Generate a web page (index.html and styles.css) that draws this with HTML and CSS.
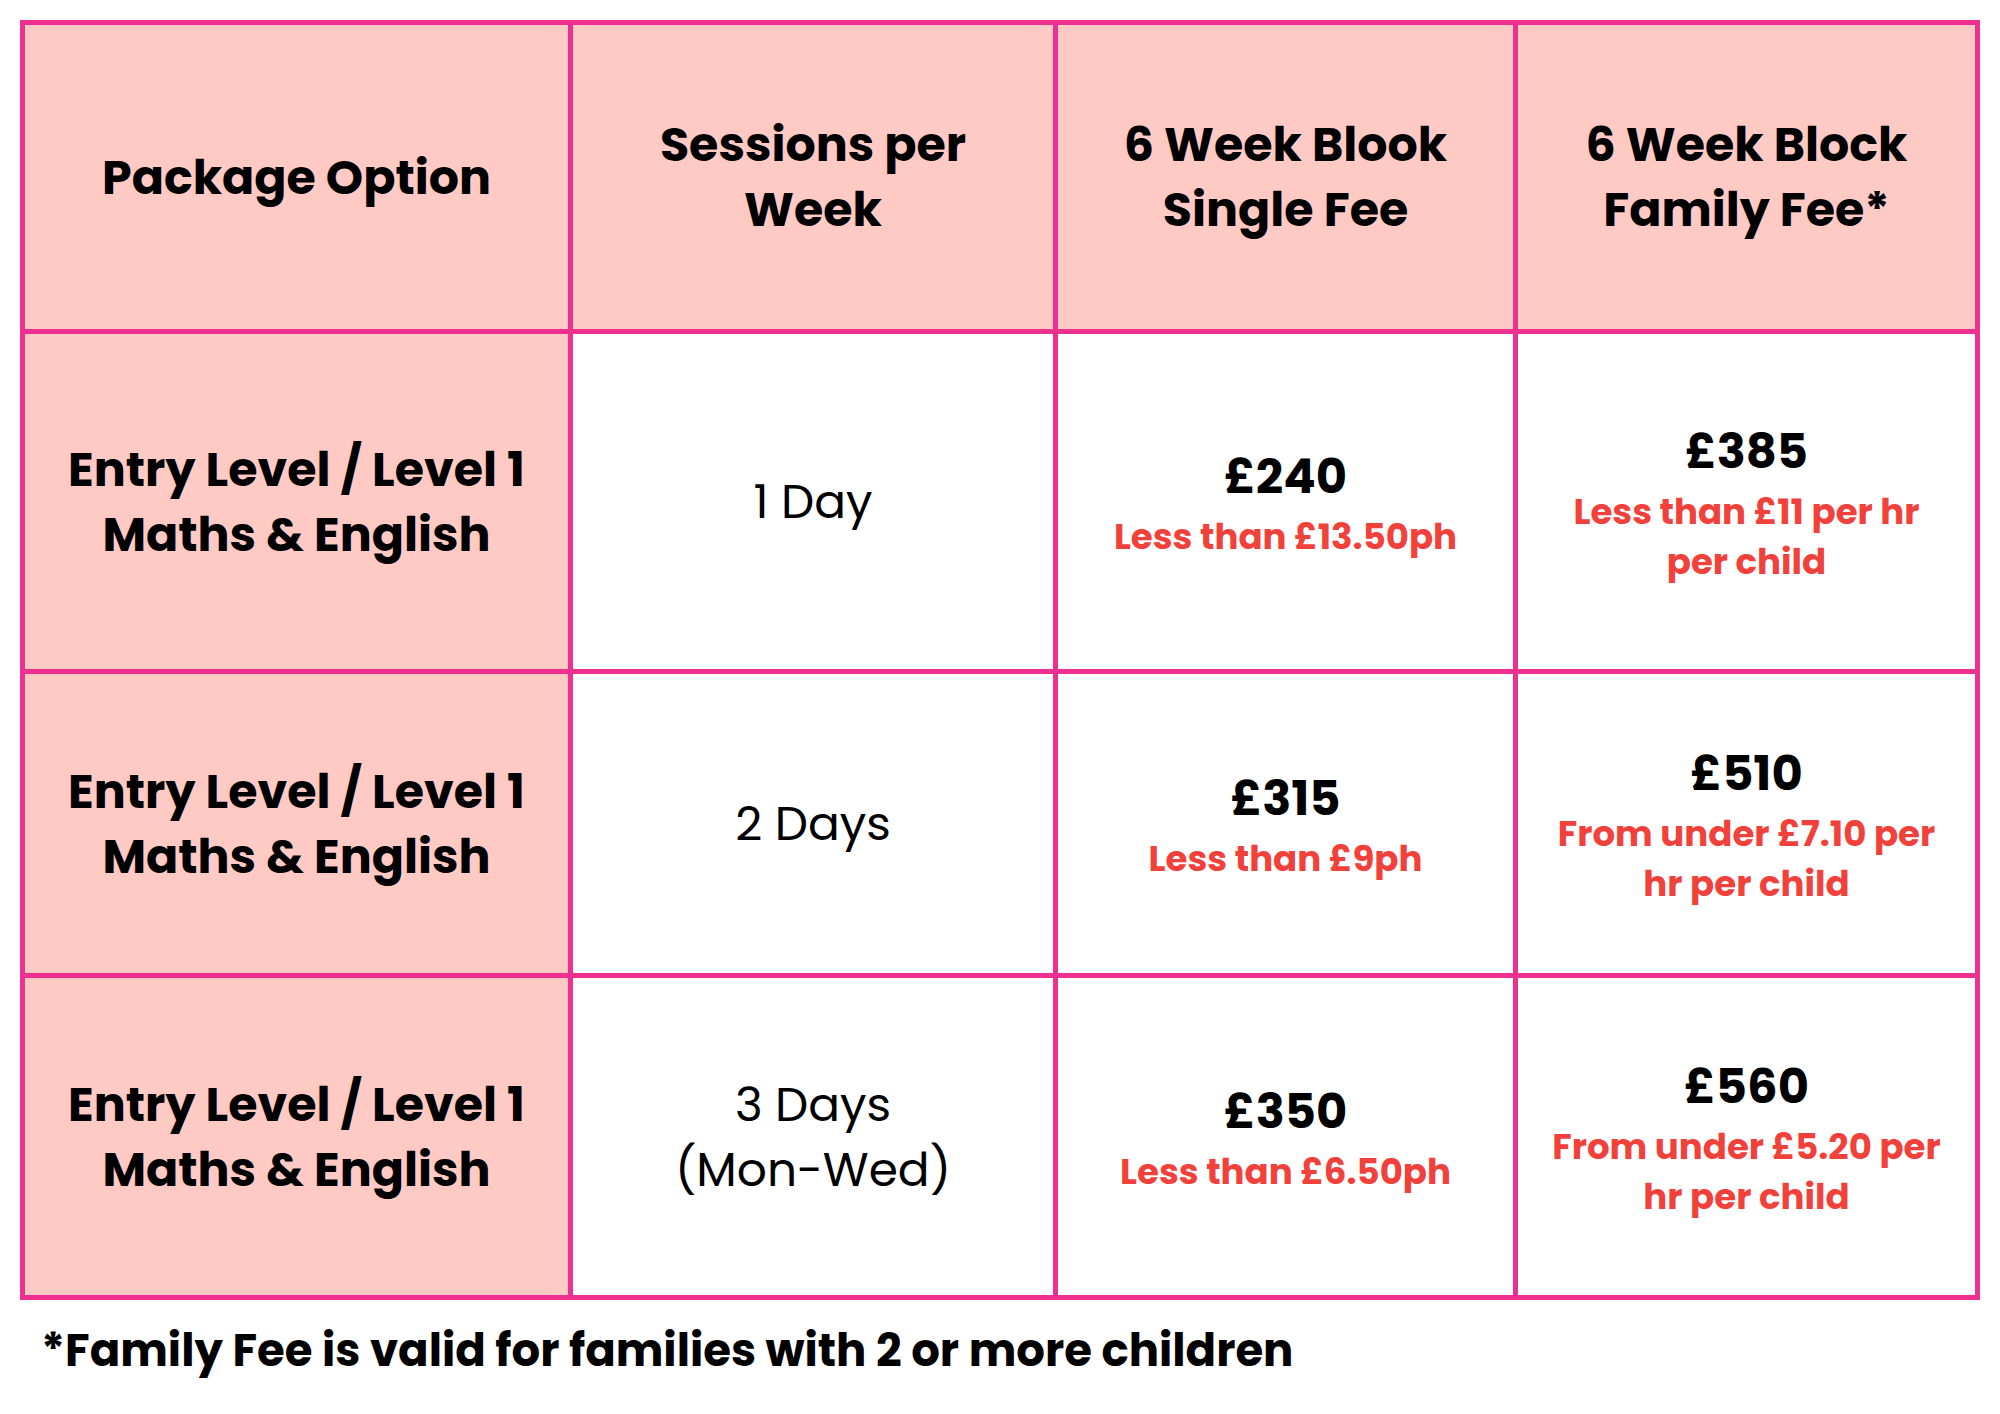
FILE: index.html
```html
<!DOCTYPE html>
<html lang="en">
<head>
<meta charset="utf-8">
<title>Package Options</title>
<link rel="stylesheet" href="styles.css">
</head>
<body>
<div class="page">
  <div class="table">
    <div class="cell head"><span class="h">Package Option</span></div>
    <div class="cell head"><span class="h">Sessions per<br>Week</span></div>
    <div class="cell head"><span class="h">6 Week Blook<br>Single Fee</span></div>
    <div class="cell head"><span class="h">6 Week Block<br>Family Fee*</span></div>

    <div class="cell label"><span class="h">Entry Level / Level 1<br>Maths &amp; English</span></div>
    <div class="cell"><span class="days">1 Day</span></div>
    <div class="cell"><span class="price">£240</span><span class="note">Less than £13.50ph</span></div>
    <div class="cell"><span class="price">£385</span><span class="note">Less than £11 per hr<br>per child</span></div>

    <div class="cell label"><span class="h">Entry Level / Level 1<br>Maths &amp; English</span></div>
    <div class="cell"><span class="days">2 Days</span></div>
    <div class="cell"><span class="price">£315</span><span class="note">Less than £9ph</span></div>
    <div class="cell"><span class="price">£510</span><span class="note">From under £7.10 per<br>hr per child</span></div>

    <div class="cell label"><span class="h">Entry Level / Level 1<br>Maths &amp; English</span></div>
    <div class="cell"><span class="days">3 Days<br>(Mon-Wed)</span></div>
    <div class="cell"><span class="price">£350</span><span class="note">Less than £6.50ph</span></div>
    <div class="cell"><span class="price">£560</span><span class="note">From under £5.20 per<br>hr per child</span></div>
  </div>
  <p class="footnote">*Family Fee is valid for families with 2 or more children</p>
</div>
</body>
</html>
```

FILE: styles.css
```css
html, body {
  margin: 0;
  padding: 0;
  background: #ffffff;
}

body {
  font-family: "Poppins", "Open Sans", "DejaVu Sans", sans-serif;
  color: #000000;
}

.page {
  padding: 20px 20px 0 20px;
}

.table {
  display: grid;
  grid-template-columns: 543px 480px 455px 457px;
  grid-template-rows: 304px 335px 299px 317px;
  gap: 5px;
  padding: 5px;
  background: #ee3191;
  width: 1950px;
}

.cell {
  background: #ffffff;
  display: flex;
  flex-direction: column;
  align-items: center;
  justify-content: center;
  text-align: center;
}

.head,
.label {
  background: #ffcac4;
}

.h {
  font-weight: 700;
  font-size: 47.5px;
  line-height: 65px;
  white-space: nowrap;
}

.days {
  font-weight: 400;
  font-size: 47px;
  line-height: 65px;
  white-space: nowrap;
}

.price {
  margin-top: 6px;
  font-weight: 700;
  font-size: 48px;
  line-height: 60px;
  white-space: nowrap;
}

.note {
  margin-top: 5px;
  font-weight: 700;
  font-size: 35.6px;
  line-height: 50px;
  color: #f2403a;
  white-space: nowrap;
}

.footnote {
  margin: 21px 0 0 21px;
  font-weight: 700;
  font-size: 45px;
  line-height: 60px;
}
```
